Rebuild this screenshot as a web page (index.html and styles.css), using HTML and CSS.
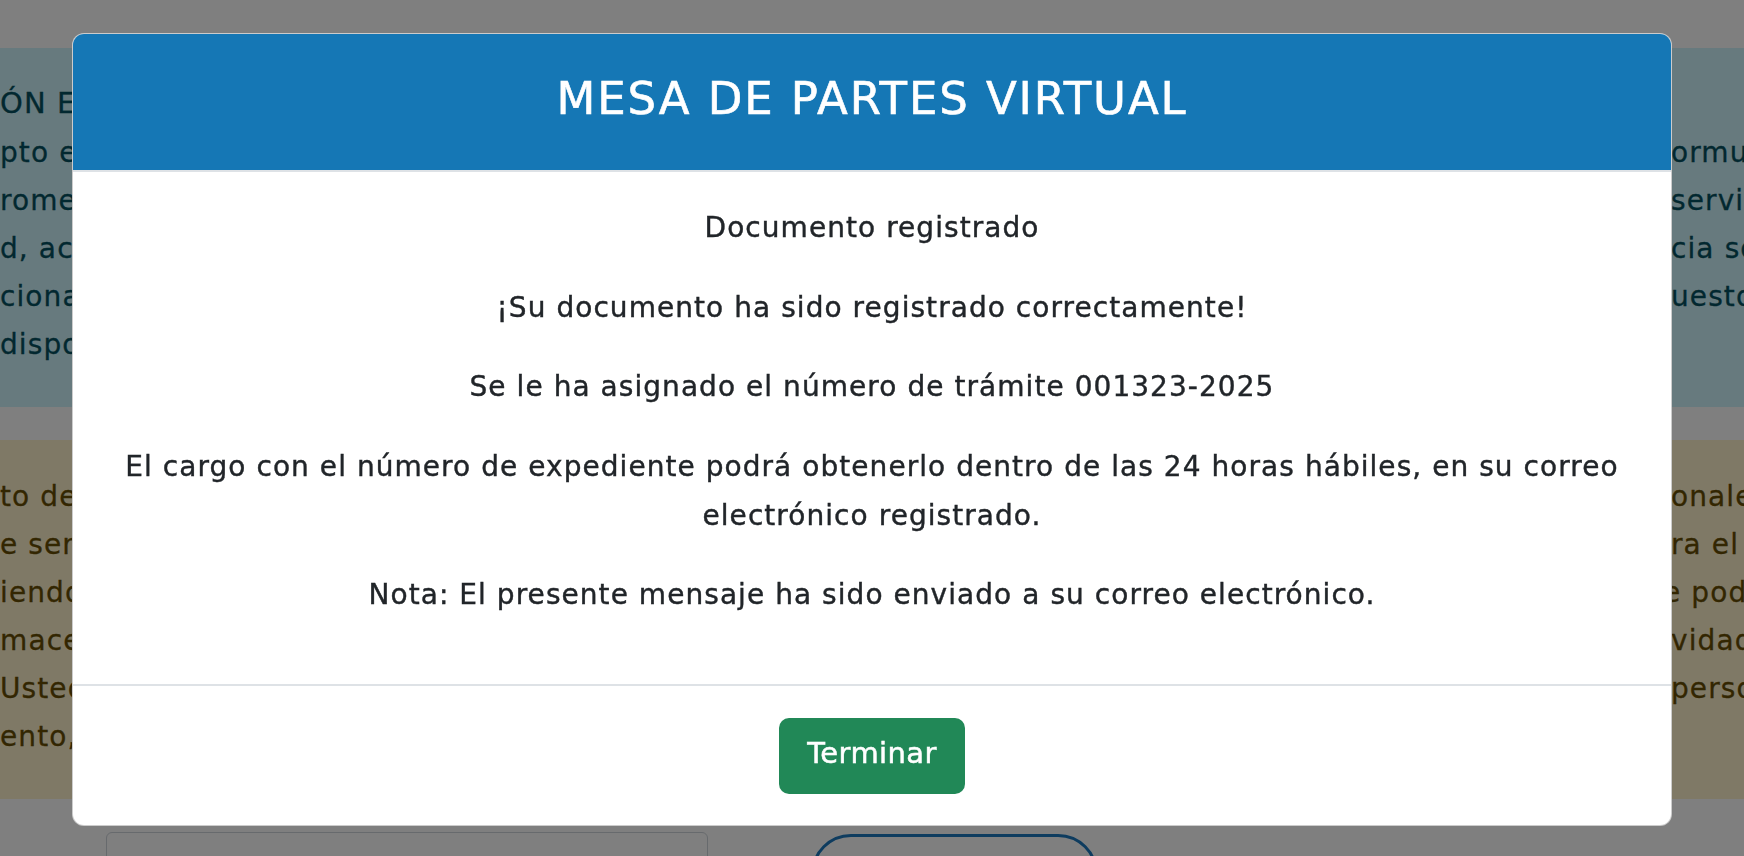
FILE: index.html
```html
<!DOCTYPE html>
<html lang="es">
<head>
  <meta charset="UTF-8" />
  <meta name="viewport" content="width=device-width, initial-scale=1.0"/>
  <title>Mesa de Partes Virtual</title>
  <link rel="stylesheet" href="styles.css">
</head>
<body class="modal-open">

  <div class="page">
    <div class="notice notice-info">
      <div class="notice-title">ÓN EN LÍNEA</div>
      <div class="notice-line"><span>pto en el presente formulario</span><span>ormulario</span></div>
      <div class="notice-line"><span>rometo a hacer uso del servicio</span><span>servicio</span></div>
      <div class="notice-line"><span>d, actuando con diligencia social</span><span>cia social</span></div>
      <div class="notice-line"><span>cionados en el presupuesto</span><span>uestos</span></div>
      <div class="notice-line"><span> disposiciones vigentes.</span><span></span></div>
    </div>

    <div class="notice notice-warning">
      <div class="notice-line"><span>to de datos personales</span><span>onales</span></div>
      <div class="notice-line"><span>e serán utilizados para el servicio</span><span>ra el servicio</span></div>
      <div class="notice-line"><span>iendo que se podrá</span><span class="cut">e podrá</span></div>
      <div class="notice-line"><span>macenados para la actividad</span><span>vidad</span></div>
      <div class="notice-line"><span>Usted puede ejercer sus derechos personales</span><span>personales</span></div>
      <div class="notice-line"><span>ento, conforme a ley.</span><span></span></div>
    </div>

    <div class="form-row">
      <div class="form-input"></div>
      <button class="btn-outline"></button>
    </div>
  </div>

  <div class="modal-backdrop"></div>

  <div class="modal">
    <div class="modal-dialog">
      <div class="modal-header">
        <h2 class="modal-title">MESA DE PARTES VIRTUAL</h2>
      </div>
      <div class="modal-body">
        <p>Documento registrado</p>
        <p>¡Su documento ha sido registrado correctamente!</p>
        <p>Se le ha asignado el número de trámite 001323-2025</p>
        <p>El cargo con el número de expediente podrá obtenerlo dentro de las 24 horas hábiles, en su correo electrónico registrado.</p>
        <p>Nota: El presente mensaje ha sido enviado a su correo electrónico.</p>
      </div>
      <div class="modal-footer">
        <button class="btn-terminar">Terminar</button>
      </div>
    </div>
  </div>

</body>
</html>
```

FILE: styles.css
```css
body {
  margin: 0;
  font-family: "DejaVu Sans", sans-serif;
  color: #212529;
  background: #fff;
}
.modal-open {
  overflow: hidden;
}

/* page behind the modal */
.page {
  padding-top: 48px;
}
.notice {
  font-size: 28px;
  letter-spacing: 1.1px;
  line-height: 48px;
  -webkit-text-stroke: 0.3px currentColor;
}
.notice-info {
  background: #cff4fc;
  color: #055160;
  padding: 31px 0 38px;
  margin-bottom: 33px;
}
.notice-warning {
  background: #fff3cd;
  color: #664d03;
  padding: 33px 0 38px;
  margin-bottom: 33px;
}
.notice-title {
  font-size: 29px;
  margin-bottom: 2px;
}
.notice-line {
  display: grid;
  grid-template-columns: 1fr 73px;
}
.notice-line span {
  min-width: 0;
  overflow: hidden;
  white-space: nowrap;
}
.notice-line .cut {
  text-indent: -8px;
}
.form-row {
  display: flex;
  gap: 103px;
  padding-left: 106px;
}
.form-input {
  width: 602px;
  height: 60px;
  border: 1px solid #ced4da;
  border-radius: 6px;
  box-sizing: border-box;
}
.btn-outline {
  width: 287px;
  height: 80px;
  margin-top: 2px;
  border: 3px solid #1c78be;
  border-radius: 40px;
  background: none;
}

/* modal */
.modal-backdrop {
  position: fixed;
  top: 0; left: 0;
  width: 100vw; height: 100vh;
  background: rgba(0,0,0,0.5);
}
.modal {
  position: fixed;
  top: 0; left: 0;
  width: 100vw; height: 100vh;
  display: flex;
  justify-content: center;
  align-items: flex-start;
  padding-top: 33px;
  box-sizing: border-box;
}
.modal-dialog {
  width: 1598px;
  background: #fff;
  border: 1px solid rgba(0,0,0,0.2);
  border-radius: 12px;
  overflow: hidden;
}
.modal-header {
  height: 129px;
  padding-bottom: 7px;
  background: #1577b5;
  border-bottom: 2px solid #dee2e6;
  display: flex;
  align-items: center;
  justify-content: center;
}
.modal-title {
  margin: 0;
  color: #fff;
  font-size: 45px;
  font-weight: normal;
  letter-spacing: 1.9px;
  -webkit-text-stroke: 0.6px #fff;
}
.modal-body {
  padding: 31px 16px 65px;
  text-align: center;
  font-size: 28px;
  letter-spacing: 1.05px;
  line-height: 49px;
  -webkit-text-stroke: 0.4px #212529;
}
.modal-body p {
  margin: 0 0 30.5px;
}
.modal-body p:last-child {
  margin-bottom: 0;
}
.modal-footer {
  border-top: 2px solid #dee2e6;
  padding: 32px 0 31px;
  display: flex;
  justify-content: center;
}
.btn-terminar {
  height: 76px;
  padding: 0 28px 6px;
  background: #218857;
  color: #fff;
  border: none;
  border-radius: 10px;
  font-family: "DejaVu Sans", sans-serif;
  font-size: 29px;
  letter-spacing: 0.4px;
  -webkit-text-stroke: 0.5px #fff;
  cursor: pointer;
}
```
